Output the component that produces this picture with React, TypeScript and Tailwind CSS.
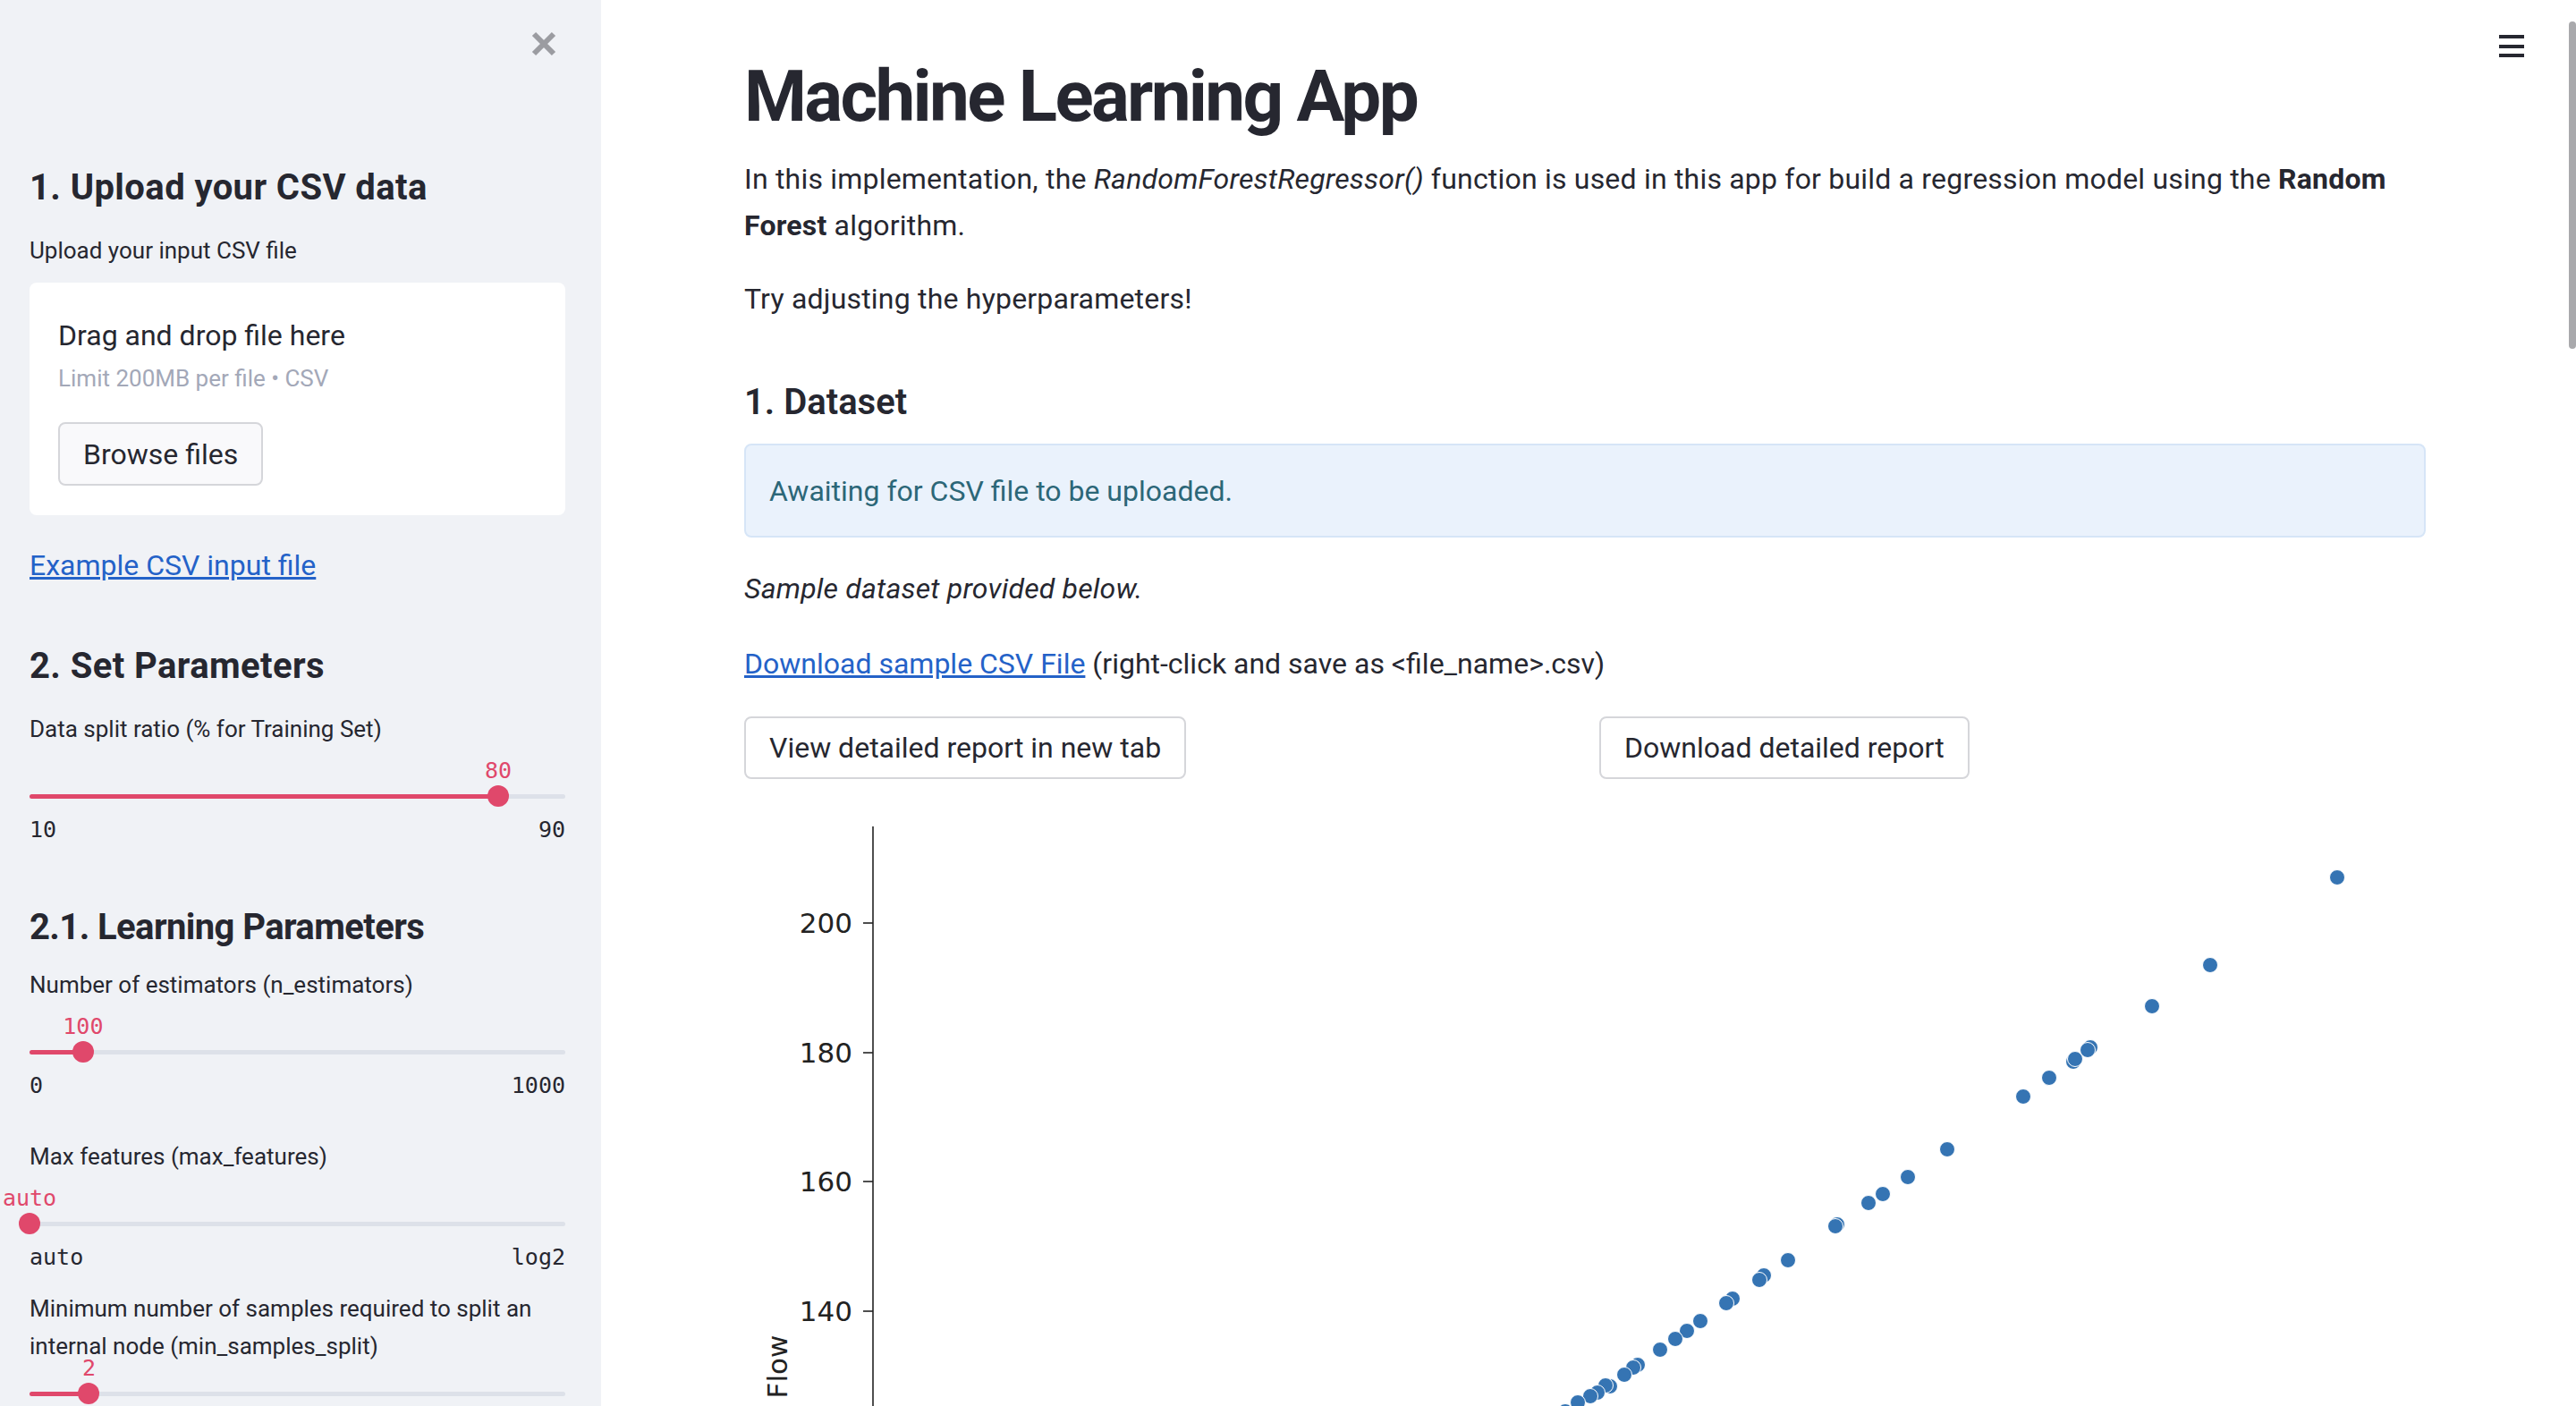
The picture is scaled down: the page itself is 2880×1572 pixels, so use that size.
import React from 'react';

const points: [number, number][] = [
    [1781, 81], [1639, 179], [1574, 225], [1505, 271], [1502, 274], [1486, 287], [1488, 284],
    [1459, 305], [1430, 326], [1345, 385], [1301, 416], [1273, 435], [1257, 445], [1222, 469],
    [1220, 471], [1167, 509], [1140, 526], [1135, 531], [1105, 552], [1098, 557], [1069, 577],
    [1054, 588], [1041, 597], [1024, 609], [999, 626], [994, 629], [984, 637], [968, 650],
    [963, 649], [954, 657], [946, 661], [932, 668], [918, 678], [905, 688],
];

const ticks = [
    { label: '200', y: 132 },
    { label: '180', y: 277 },
    { label: '160', y: 421 },
    { label: '140', y: 566 },
];

interface SliderProps {
    pct: number;
    value: string;
    min: string;
    max: string;
}

const Slider: React.FC<SliderProps> = ({ pct, value, min, max }) => (
    <div className="font-['DejaVu_Sans_Mono',monospace] text-[25px]">
        {/* value above thumb */}
        <div className="relative h-[28px]">
            <span
                className="absolute top-0 -translate-x-1/2 leading-[28px] text-[#e0486b]"
                style={{ left: `${pct}%` }}
            >
                {value}
            </span>
        </div>
        {/* track */}
        <div className="relative h-[28px] flex items-center">
            <div className="w-full h-[5px] rounded-full bg-[#dde1e9]" />
            <div className="absolute left-0 h-[5px] rounded-full bg-[#e0486b]" style={{ width: `${pct}%` }} />
            <div
                className="absolute w-[24px] h-[24px] rounded-full bg-[#e0486b] -translate-x-1/2"
                style={{ left: `${pct}%` }}
            />
        </div>
        <div className="mt-[10px] flex justify-between leading-[28px] text-[#262730]">
            <span>{min}</span>
            <span>{max}</span>
        </div>
    </div>
);

const Sidebar: React.FC = () => (
    <aside className="w-[672px] shrink-0 h-full overflow-hidden bg-[#f0f2f6] pl-[33px] pr-[40px] text-[#262730]">
        <div className="flex justify-end pt-[35px] pr-[10px]">
            <svg width="28" height="28" viewBox="0 0 28 28">
                <path d="M3 3 L25 25 M25 3 L3 25" stroke="#9b9ca1" strokeWidth="6" />
            </svg>
        </div>

        <h2 className="mt-[123px] text-[40px] leading-[48px] font-bold tracking-[0.4px]">1. Upload your CSV data</h2>
        <p className="mt-[25px] text-[26px] leading-[42px]">Upload your input CSV file</p>

        {/* File uploader */}
        <div className="mt-[15px] h-[260px] rounded-lg bg-white px-[32px] pt-[35px]">
            <div className="text-[32px] leading-[48px]">Drag and drop file here</div>
            <div className="mt-[6px] text-[26px] leading-[36px] text-[#a3a8b8]">Limit 200MB per file • CSV</div>
            <button className="mt-[31px] h-[71px] px-[26px] rounded-lg border-2 border-[#d5d6da] bg-[#f9f9fb] text-[32px] text-[#262730]">
                Browse files
            </button>
        </div>

        <a className="mt-[32px] block text-[32px] leading-[48px] text-[#2462c8] underline">Example CSV input file</a>

        <h2 className="mt-[65px] text-[40px] leading-[48px] font-bold tracking-[0.4px]">2. Set Parameters</h2>
        <p className="mt-[25px] mb-[12px] text-[26px] leading-[42px]">Data split ratio (% for Training Set)</p>
        <Slider pct={87.5} value="80" min="10" max="90" />

        <h2 className="mt-[71px] text-[40px] leading-[48px] font-bold tracking-[-0.6px]">2.1. Learning Parameters</h2>
        <p className="mt-[19px] mb-[12px] text-[26px] leading-[42px]">Number of estimators (n_estimators)</p>
        <Slider pct={10} value="100" min="0" max="1000" />

        <p className="mt-[44px] mb-[12px] text-[26px] leading-[42px]">Max features (max_features)</p>
        <Slider pct={0} value="auto" min="auto" max="log2" />

        <p className="mt-[22px] mb-[-10px] text-[26px] leading-[42px]">
            Minimum number of samples required to split an
            <br />
            internal node (min_samples_split)
        </p>
        <Slider pct={11.1} value="2" min="1" max="10" />
    </aside>
);

const Chart: React.FC = () => (
    <svg width="1880" height="672" className="mt-[29px] block">
        <line x1="144" y1="24" x2="144" y2="672" stroke="#222" strokeWidth="1.6" />
        {ticks.map((t) => (
            <g key={t.label}>
                <line x1="133" y1={t.y} x2="144" y2={t.y} stroke="#222" strokeWidth="1.6" />
                <text
                    x="121"
                    y={t.y + 11}
                    textAnchor="end"
                    fontSize="31"
                    fill="#222"
                    fontFamily="DejaVu Sans, sans-serif"
                >
                    {t.label}
                </text>
            </g>
        ))}
        <text
            x="48"
            y="628"
            transform="rotate(-90 48 628)"
            textAnchor="middle"
            fontSize="31"
            fill="#222"
            fontFamily="DejaVu Sans, sans-serif"
        >
            Flow
        </text>
        {points.map(([x, y], i) => (
            <circle key={i} cx={x} cy={y} r="8.5" fill="#3574b3" stroke="#fff" strokeWidth="1" />
        ))}
    </svg>
);

export default function App() {
    return (
        <div className="flex h-screen w-full overflow-hidden font-['Roboto',sans-serif] text-[#262730]">
            <Sidebar />

            <main className="relative flex-1 h-full overflow-hidden bg-white">
                {/* hamburger menu */}
                <div className="absolute top-[39px] right-[58px] w-[28px] h-[25px] flex flex-col justify-between">
                    <div className="h-[4px] bg-[#262730]" />
                    <div className="h-[4px] bg-[#262730]" />
                    <div className="h-[4px] bg-[#262730]" />
                </div>
                {/* scrollbar thumb */}
                <div className="absolute right-0 top-[24px] w-[8px] h-[366px] rounded-full bg-[#a9a9ac]" />

                <div className="w-[2040px] pl-[160px] pt-[60px]">
                    <h1 className="text-[80px] leading-[96px] font-bold tracking-[-2.7px]">Machine Learning App</h1>
                    <p className="mt-[18px] text-[32px] leading-[52px] tracking-[0.2px]">
                        In this implementation, the <i>RandomForestRegressor()</i> function is used in this app for build a regression model using the <b>Random</b>
                        <br />
                        <b>Forest</b> algorithm.
                    </p>
                    <p className="mt-[30px] text-[32px] leading-[52px] tracking-[0.2px]">Try adjusting the hyperparameters!</p>

                    <h3 className="mt-[66px] text-[40px] leading-[48px] font-semibold">1. Dataset</h3>
                    <div className="mt-[22px] h-[105px] rounded-lg border-2 border-[#d6e5f7] bg-[#eaf2fc] px-[26px] flex items-center text-[32px] text-[#2c6778]">
                        Awaiting for CSV file to be uploaded.
                    </div>

                    <p className="mt-[31px] text-[32px] leading-[52px] italic tracking-[0.2px]">Sample dataset provided below.</p>
                    <p className="mt-[32px] text-[32px] leading-[52px]">
                        <a className="text-[#2462c8] underline">Download sample CSV File</a> (right-click and save as &lt;file_name&gt;.csv)
                    </p>

                    <div className="mt-[33px] grid grid-cols-2 gap-[32px]">
                        <div>
                            <button className="h-[70px] px-[26px] rounded-lg border-2 border-[#d5d6da] bg-white text-[32px] text-[#262730]">
                                View detailed report in new tab
                            </button>
                        </div>
                        <div>
                            <button className="h-[70px] px-[26px] rounded-lg border-2 border-[#d5d6da] bg-white text-[32px] text-[#262730]">
                                Download detailed report
                            </button>
                        </div>
                    </div>

                    <Chart />
                </div>
            </main>
        </div>
    );
}
